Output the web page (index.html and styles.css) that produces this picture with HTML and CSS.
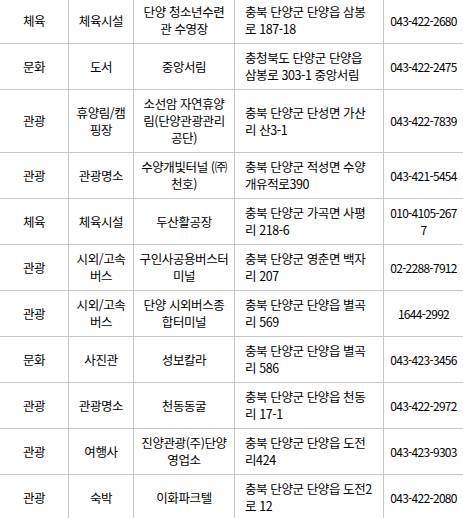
FILE: index.html
```html
<!DOCTYPE html>
<html lang="ko">
<head>
<meta charset="utf-8">
<title>단양 시설 목록</title>
<link rel="stylesheet" href="styles.css">
</head>
<body>
<div class="list">
  <div class="row">
    <div class="cell">체육</div>
    <div class="cell">체육시설</div>
    <div class="cell">단양 청소년수련관 수영장</div>
    <div class="cell addr">충북 단양군 단양읍 삼봉로 187-18</div>
    <div class="cell tel">043-422-2680</div>
  </div>
  <div class="row">
    <div class="cell">문화</div>
    <div class="cell">도서</div>
    <div class="cell">중앙서림</div>
    <div class="cell addr">충청북도 단양군 단양읍 삼봉로 303-1 중앙서림</div>
    <div class="cell tel">043-422-2475</div>
  </div>
  <div class="row">
    <div class="cell">관광</div>
    <div class="cell">휴양림/캠핑장</div>
    <div class="cell">소선암 자연휴양림(단양관광관리공단)</div>
    <div class="cell addr">충북 단양군 단성면 가산리 산3-1</div>
    <div class="cell tel">043-422-7839</div>
  </div>
  <div class="row">
    <div class="cell">관광</div>
    <div class="cell">관광명소</div>
    <div class="cell">수양개빛터널 (㈜천호)</div>
    <div class="cell addr">충북 단양군 적성면 수양개유적로390</div>
    <div class="cell tel">043-421-5454</div>
  </div>
  <div class="row">
    <div class="cell">체육</div>
    <div class="cell">체육시설</div>
    <div class="cell">두산활공장</div>
    <div class="cell addr">충북 단양군 가곡면 사평리 218-6</div>
    <div class="cell tel">010-4105-2677</div>
  </div>
  <div class="row">
    <div class="cell">관광</div>
    <div class="cell">시외/고속버스</div>
    <div class="cell">구인사공용버스터미널</div>
    <div class="cell addr">충북 단양군 영춘면 백자리 207</div>
    <div class="cell tel">02-2288-7912</div>
  </div>
  <div class="row">
    <div class="cell">관광</div>
    <div class="cell">시외/고속버스</div>
    <div class="cell">단양 시외버스종합터미널</div>
    <div class="cell addr">충북 단양군 단양읍 별곡리 569</div>
    <div class="cell tel">1644-2992</div>
  </div>
  <div class="row">
    <div class="cell">문화</div>
    <div class="cell">사진관</div>
    <div class="cell">성보칼라</div>
    <div class="cell addr">충북 단양군 단양읍 별곡리 586</div>
    <div class="cell tel">043-423-3456</div>
  </div>
  <div class="row">
    <div class="cell">관광</div>
    <div class="cell">관광명소</div>
    <div class="cell">천동동굴</div>
    <div class="cell addr">충북 단양군 단양읍 천동리 17-1</div>
    <div class="cell tel">043-422-2972</div>
  </div>
  <div class="row">
    <div class="cell">관광</div>
    <div class="cell">여행사</div>
    <div class="cell">진양관광(주)단양영업소</div>
    <div class="cell addr">충북 단양군 단양읍 도전리424</div>
    <div class="cell tel">043-423-9303</div>
  </div>
  <div class="row">
    <div class="cell">관광</div>
    <div class="cell">숙박</div>
    <div class="cell">이화파크텔</div>
    <div class="cell addr">충북 단양군 단양읍 도전2로 12</div>
    <div class="cell tel">043-422-2080</div>
  </div>
</div>
</body>
</html>
```

FILE: styles.css
```css
html, body {
  margin: 0;
  padding: 0;
  background: #fff;
}

body {
  font-family: "Noto Sans CJK KR", "Noto Sans", sans-serif;
  font-size: 12.5px;
  line-height: 17px;
  color: #000;
  overflow: hidden;
}

.list {
  width: 463px;
  margin-top: -2px;
}

.row {
  display: grid;
  grid-template-columns: 69px 65px 101px 149px 79px;
  border-bottom: 1px solid #c8c8c8;
}

.cell {
  box-sizing: border-box;
  display: flex;
  align-items: center;
  justify-content: center;
  text-align: center;
  padding: 5px 5px 6px;
  border-right: 1px solid #c8c8c8;
  word-break: break-all;
  letter-spacing: -0.4px;
}

.cell.addr {
  justify-content: flex-start;
  text-align: left;
  padding-left: 10px;
  padding-right: 11px;
}

.cell.tel {
  border-right: none;
  font-size: 12px;
  letter-spacing: -0.7px;
}
```
